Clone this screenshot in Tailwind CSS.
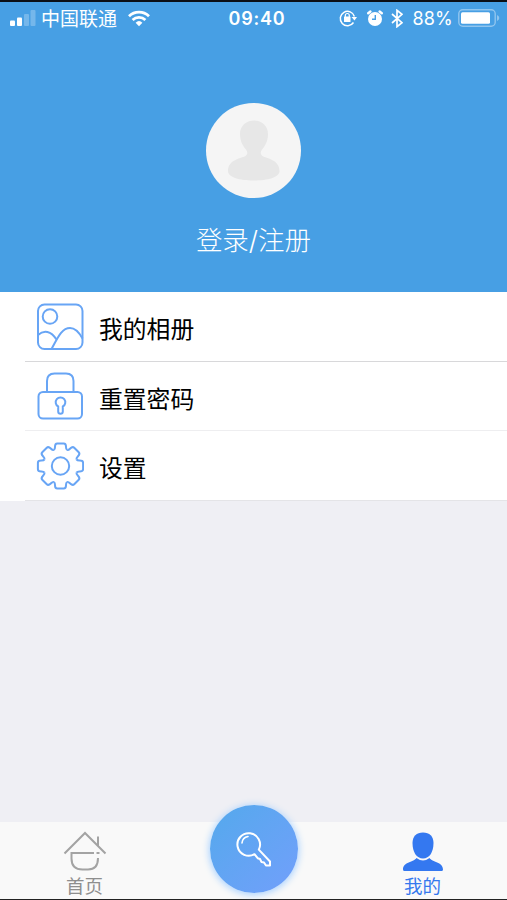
<!DOCTYPE html>
<html lang="zh-CN">
<head>
  <meta charset="UTF-8" />
  <meta name="viewport" content="width=device-width, initial-scale=1.0"/>
  <title>我的</title>
  <script src="https://cdn.jsdelivr.net/npm/@tailwindcss/browser@4"></script>
</head>
<body class="h-[900px] w-[507px] overflow-hidden bg-[#efeff4] font-['Inter','Noto_Sans_CJK_SC',sans-serif]">
  <div class="flex h-[900px] flex-col border-t-2 border-b border-t-[#0b0f16] border-b-[#222]">

    <header class="flex h-[290px] shrink-0 flex-col bg-[#479fe4] text-white">
      <!-- Status bar -->
      <div class="grid h-8 grid-cols-[1fr_auto_1fr] items-center pr-[7px] pl-[10px]">
        <div class="flex items-center">
          <svg class="h-[17px] w-[27px]" viewBox="0 0 27 17" fill="#fff">
            <rect x="0" y="10.5" width="5" height="5.5" rx="1"/>
            <rect x="7" y="7.5" width="5" height="8.5" rx="1"/>
            <rect x="14" y="4" width="5" height="12" rx="1" opacity=".25"/>
            <rect x="20.5" y="0" width="5" height="16" rx="1" opacity=".25"/>
          </svg>
          <span class="ml-[4px] pt-[3px] text-[19px] leading-[29px]">中国联通</span>
          <svg class="ml-[11px] h-[17px] w-[22px]" viewBox="0 0 22 17" fill="none" stroke="#fff" stroke-width="2.8">
            <path d="M1 6.2a14.5 14.5 0 0 1 20 0M4.6 10a9.2 9.2 0 0 1 12.8 0"/>
            <path d="M11 16.2l-3.4-3.5a5 5 0 0 1 6.8 0z" fill="#fff" stroke="none"/>
          </svg>
        </div>
        <span class="ml-[4px] text-[18px] font-semibold tracking-[0.8px]">09:40</span>
        <div class="flex items-center justify-end">
          <svg class="h-[18px] w-[18px]" viewBox="0 0 18 18" fill="none" stroke="#fff" stroke-width="1.5">
            <path d="M14.5 13.5A7.2 7.2 0 1 1 15.4 7.5"/>
            <path d="M12.5 8H18l-2.5 3.6z" fill="#fff" stroke="none"/>
            <rect x="5" y="7.5" width="6.5" height="5.5" rx=".5" fill="#fff" stroke="none"/>
            <path d="M6.3 8V6.5a2 2 0 0 1 4 0V8" stroke-width="1.2"/>
          </svg>
          <svg class="ml-[10px] h-[17px] w-[16px]" viewBox="0 0 16 17">
            <circle cx="8" cy="9" r="7" fill="#fff"/>
            <path d="M1.2 3.3L3.4 1.5M14.8 3.3L12.6 1.5" stroke="#fff" stroke-width="2.4" stroke-linecap="round"/>
            <path d="M8.3 5v4.3H5" fill="none" stroke="#479fe4" stroke-width="1.4"/>
          </svg>
          <svg class="ml-[8px] h-[19px] w-[12px]" viewBox="0 0 12 19" fill="none" stroke="#fff" stroke-width="1.7">
            <path d="M1 5l10 8.7-5 4V1.3l5 4L1 14"/>
          </svg>
          <span class="ml-[9px] text-[18px] tracking-[0.2px]">88%</span>
          <svg class="ml-[5px] h-[18px] w-[42px]" viewBox="0 0 42 18">
            <rect x=".8" y=".8" width="36.4" height="16.4" rx="4" fill="none" stroke="#fff" stroke-opacity=".4" stroke-width="1.4"/>
            <rect x="3" y="3.2" width="29" height="11.6" rx="1.5" fill="#fff"/>
            <path d="M39 6q2.3 1 2.3 3T39 12z" fill="#fff" opacity=".4"/>
          </svg>
        </div>
      </div>

      <!-- Avatar -->
      <div class="flex flex-col items-center pt-[69px]">
        <svg class="h-[95px] w-[95px]" viewBox="0 0 95 95">
          <circle cx="47.5" cy="47.5" r="47.5" fill="#f5f5f5"/>
          <path fill="#e7e7e7" d="M48 17.5c8 0 14 5.500 14 13.500 0 7.500-3 12-6 15.500-2 2.500-1.500 5 .5 6.500 4 2.500 17 3.500 17 15 0 6.500-12 9.500-25.800 9.500S22 74.500 22 68c0-11.500 13-12.500 17.500-15 2-1.500 2.500-4 .5-6.500-3-3.500-6-8-6-15.500 0-8 6-13.500 14-13.500z"/>
        </svg>
        <p class="mt-[23px] text-[26.5px] leading-[38px] font-light">登录/注册</p>
      </div>
    </header>

    <!-- Menu -->
    <ul class="shrink-0 bg-white text-[23.8px] text-black">
      <li class="flex h-[70px] items-center pl-[25px]">
        <div class="flex h-full flex-1 items-center border-b border-[#d8d8da] pl-[11px]">
          <svg class="h-[48px] w-[48px]" viewBox="0 0 48 48" fill="none" stroke="#68a5f5" stroke-width="2">
            <rect x="2" y="1.5" width="44.5" height="44.5" rx="6.5"/>
            <circle cx="14" cy="13.5" r="7.3"/>
            <path d="M2 32c6-5.5 13-4 18.5 4.5M15.5 46C21 36.5 25 25 34 25c5.5 0 9.5 5 12.5 10.5"/>
          </svg>
          <span class="ml-[15px] pt-[7px]">我的相册</span>
        </div>
      </li>
      <li class="flex h-[69px] items-center pl-[25px]">
        <div class="flex h-full flex-1 items-center border-b border-[#eeeef0] pl-[11px]">
          <svg class="h-[48px] w-[48px]" viewBox="0 0 48 48" fill="none" stroke="#68a5f5" stroke-width="2">
            <rect x="2.5" y="20" width="43.5" height="26.5" rx="4.5"/>
            <path d="M11 20V9q0-7.5 7.5-7.5H30q7.5 0 7.5 7.5v11"/>
            <path d="M22.2 34.5a4.8 4.8 0 1 1 4.6 0v5a2.3 2.3 0 0 1-4.6 0z"/>
          </svg>
          <span class="ml-[15px] pt-[7px]">重置密码</span>
        </div>
      </li>
      <li class="flex h-[70px] items-center pl-[25px]">
        <div class="flex h-full flex-1 items-center border-b border-[#e4e4e7] pl-[11px]">
          <svg class="h-[48px] w-[48px]" viewBox="-24.5 -24 48 48" fill="none" stroke="#68a5f5" stroke-width="2">
            <defs>
              <path id="tooth" d="M-6.6-16C-5.4-16.8-5.5-18-5.5-19.2C-5.5-21.5-4.8-22.6-3.200-22.600H3.200C4.800-22.600 5.500-21.500 5.500-19.200C5.500-18 5.400-16.800 6.600-16"/>
            </defs>
            <use href="#tooth"/>
            <use href="#tooth" transform="rotate(45)"/>
            <use href="#tooth" transform="rotate(90)"/>
            <use href="#tooth" transform="rotate(135)"/>
            <use href="#tooth" transform="rotate(180)"/>
            <use href="#tooth" transform="rotate(225)"/>
            <use href="#tooth" transform="rotate(270)"/>
            <use href="#tooth" transform="rotate(315)"/>
            <circle r="8.7"/>
          </svg>
          <span class="ml-[15px] pt-[7px]">设置</span>
        </div>
      </li>
    </ul>

    <!-- Tab bar -->
    <nav class="mt-auto grid h-[77px] shrink-0 grid-cols-3 bg-[#f9f9f9] text-[18.5px] leading-[24px]">
      <a class="flex flex-col items-center pt-[9px] text-[#8e8e8e]">
        <svg class="h-[42px] w-[44px]" viewBox="0 0 44 42" fill="none" stroke="#a3a3a3" stroke-width="2">
          <path d="M1.5 22.5L22 2l20.5 20.5M35 15V5.5"/>
          <path d="M31 22H8.5v5.5q0 11 11 11H25q10 0 10-11.5M33.5 22h3"/>
        </svg>
        <span class="pt-px">首页</span>
      </a>
      <a class="flex justify-center">
        <span class="-mt-[17px] flex h-[88px] w-[88px] items-center justify-center rounded-full bg-linear-135 from-[#53a9ec] to-[#719ffb] shadow-[0_1px_7px_1px_#a9d2ff]">
          <svg class="h-[36px] w-[36px]" viewBox="0 0 36 36" fill="none" stroke="#fff" stroke-width="2" stroke-linejoin="round" stroke-linecap="round">
            <path d="M18.5 23.2a11.3 11.3 0 1 1 4.3-4.6L34 30.5v4h-4l-2-3-2.5-.5-1.5-3-2.3-.8z"/>
            <path d="M6 12q.5-5.5 6-6.5" stroke-width="1.6"/>
          </svg>
        </span>
      </a>
      <a class="flex flex-col items-center pt-[9px] text-[#3478ee]">
        <svg class="h-[42px] w-[44px]" viewBox="0 0 44 42" fill="#3478f0">
          <path d="M22 1.500C28.500 1.500 32.500 5.500 32.500 12C32.500 21 28.500 27.500 22 27.500S11.500 21 11.500 12C11.500 5.500 15.500 1.500 22 1.500z"/>
          <path d="M15.500 27q3.500 2.500 6.500 2.500t6.500-2.500C31 31 42 31 42 38.500q0 1.500-1.500 1.500h-37q-1.500 0-1.500-1.500C2 31 13 31 15.500 27z"/>
        </svg>
        <span class="pt-px">我的</span>
      </a>
    </nav>
  </div>
</body>
</html>
